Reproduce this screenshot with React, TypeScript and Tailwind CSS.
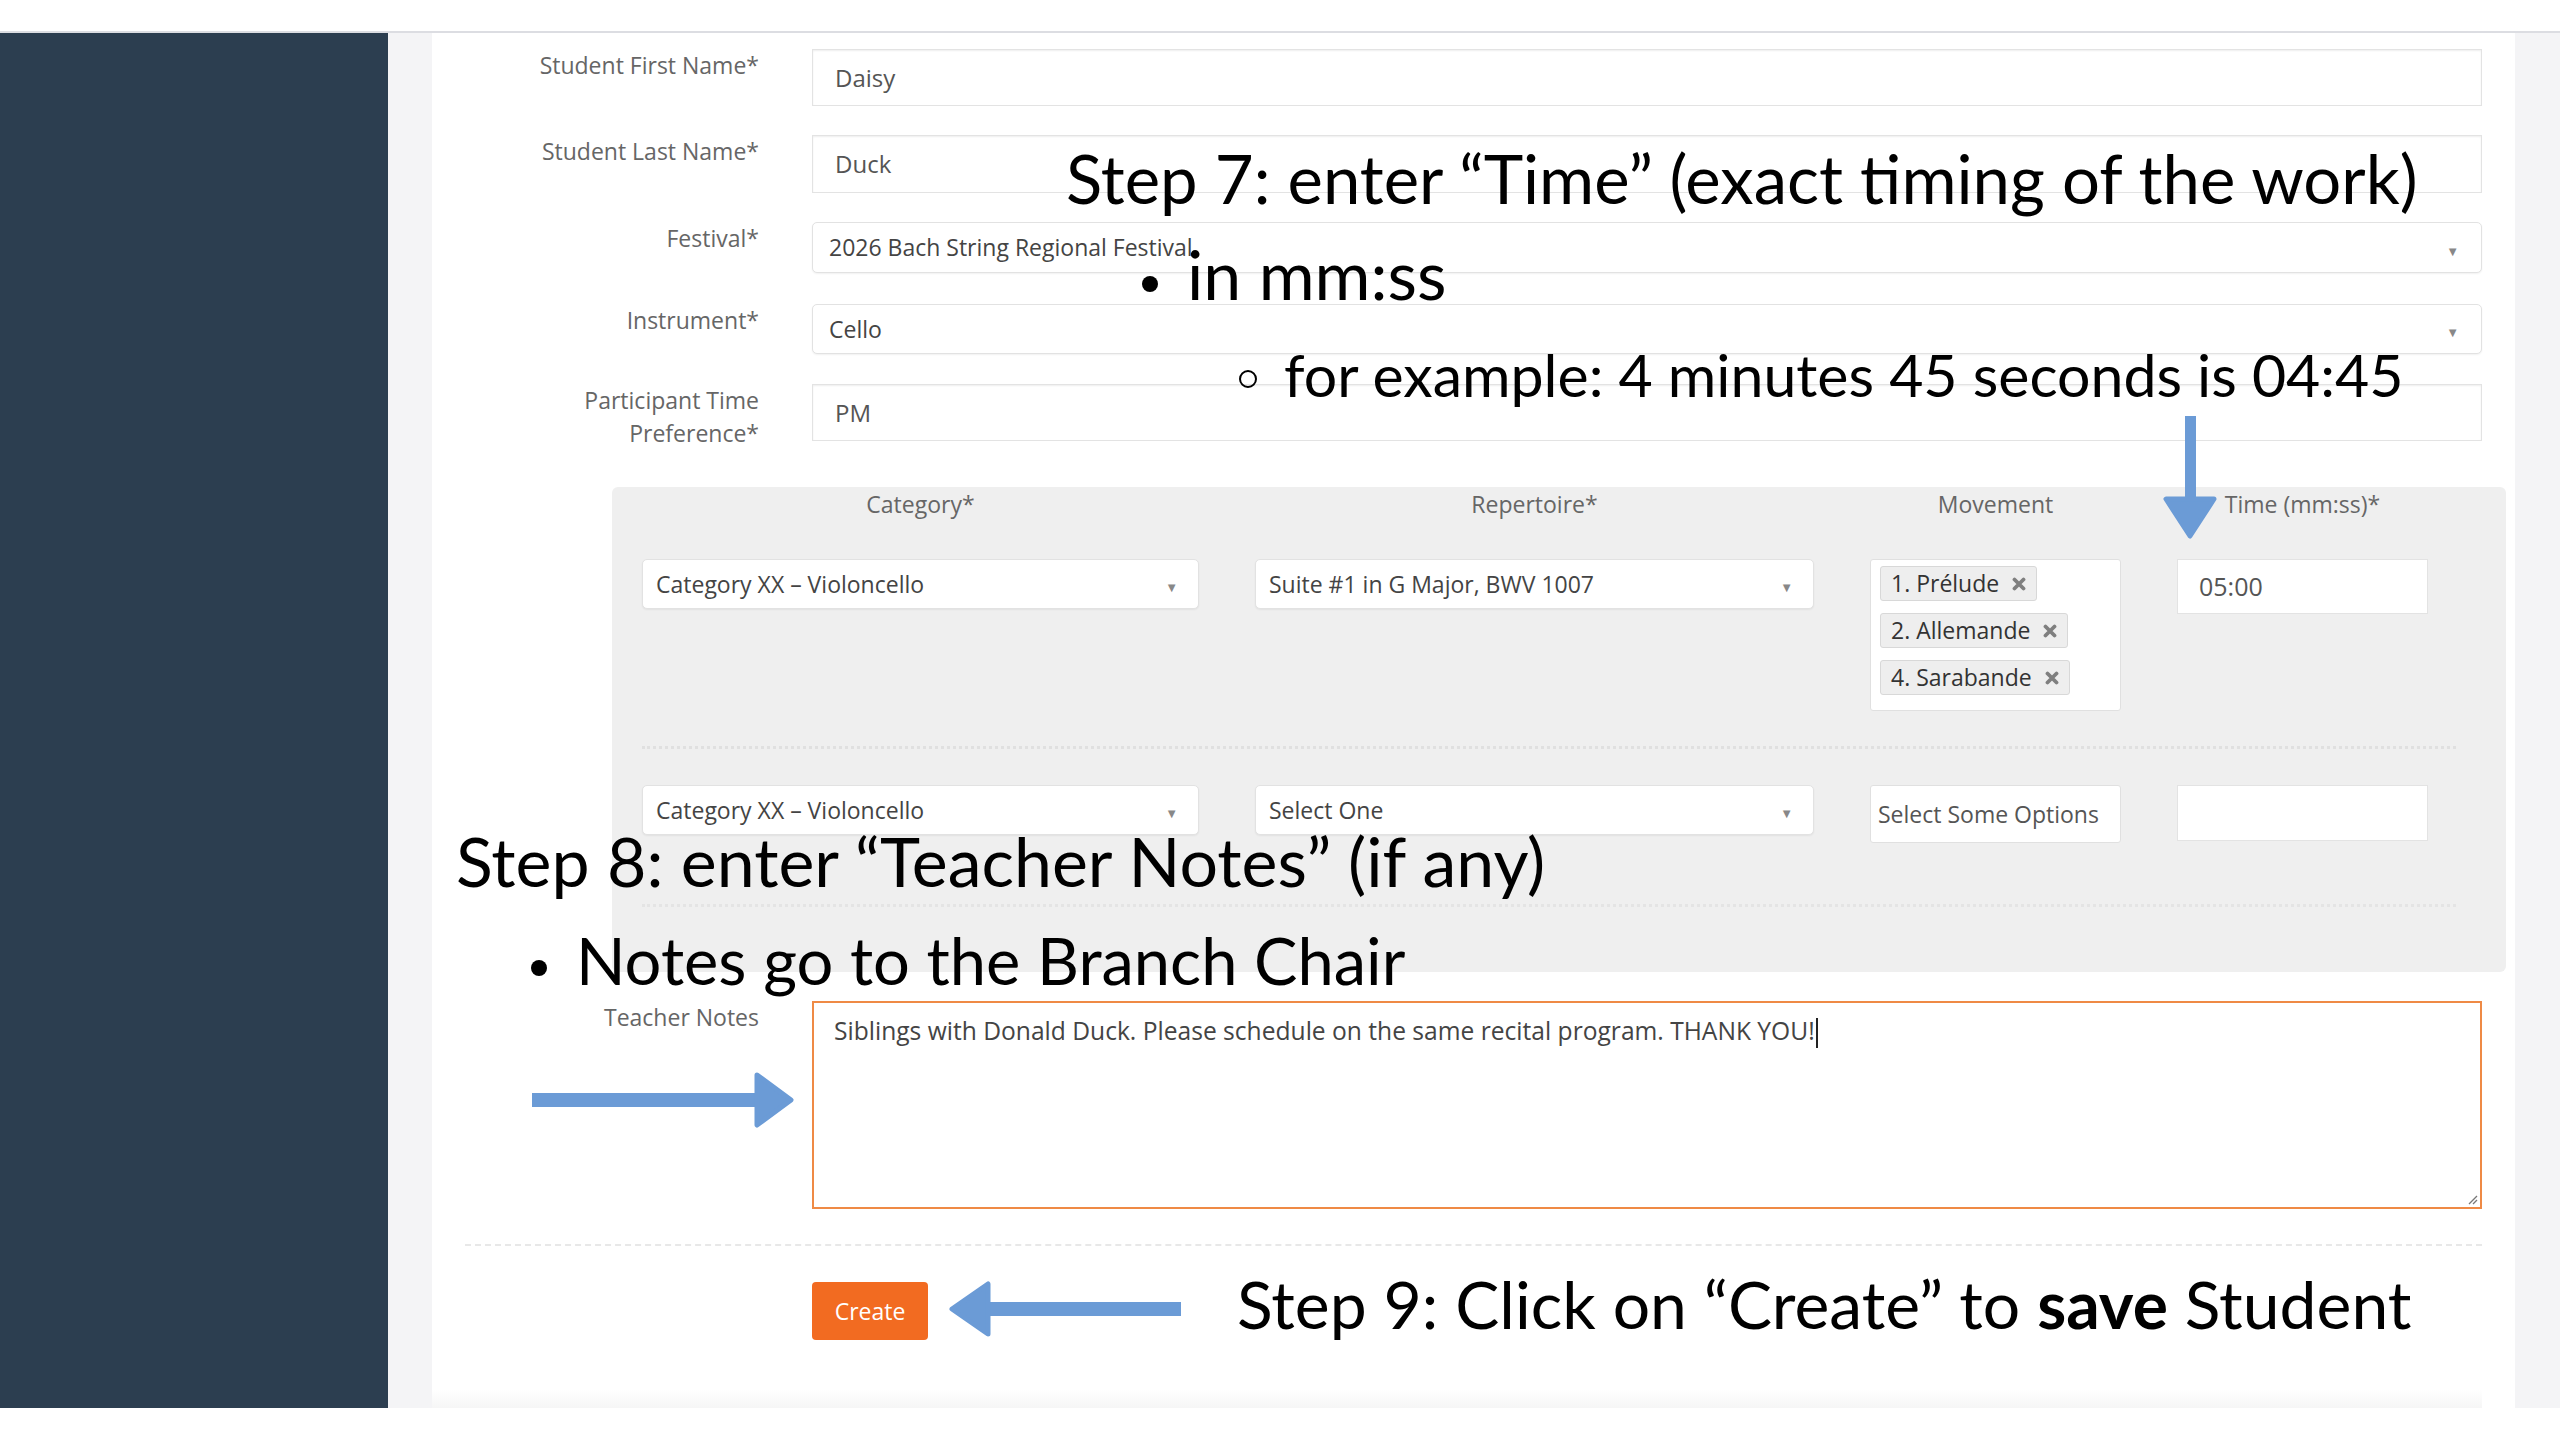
import React from 'react'

function Label({ children }: { children: React.ReactNode }) {
  return (
    <div className="w-[327px] shrink-0 text-right text-[23px] leading-[33px] text-[#666]">{children}</div>
  )
}

function TextInput({ value, h }: { value: string; h: string }) {
  return (
    <div
      className={`ml-[53px] w-[1670px] ${h} shrink-0 flex items-center pl-[22px] bg-white border border-[#e3e3e3] shadow-[inset_0_1px_2px_rgba(0,0,0,0.07)] text-[24px] text-[#555]`}
    >
      {value}
    </div>
  )
}

function Caret() {
  return <span className="text-[13px] text-[#888] mt-[8px]">▼</span>
}

function Select({ value, className }: { value: string; className: string }) {
  return (
    <div
      className={`${className} shrink-0 flex items-center justify-between bg-white border border-[#e2e2e2] rounded-[5px] shadow-[0_1px_2px_rgba(0,0,0,0.06)] text-[23px] text-[#444]`}
    >
      <span>{value}</span>
      <Caret />
    </div>
  )
}

function Tag({ text }: { text: string }) {
  return (
    <div className="h-[35px] flex items-center gap-[13px] pl-[10px] pr-[10px] bg-[#eeeeee] border border-[#d8d8d8] rounded-[3px] text-[23px] text-[#333]">
      <span>{text}</span>
      <svg width="14" height="14" viewBox="0 0 14 14">
        <path d="M2.5 2.5 L11.5 11.5 M11.5 2.5 L2.5 11.5" stroke="#7f7f7f" strokeWidth="3.8" strokeLinecap="round" />
      </svg>
    </div>
  )
}

function Arrow({ dir }: { dir: 'down' | 'right' | 'left' }) {
  if (dir === 'down') {
    return (
      <svg className="absolute left-[2160px] top-[414px]" width="60" height="130" viewBox="2160 414 60 130">
        <rect x="2185" y="416" width="11" height="86" fill="#6b9bd6" />
        <polygon points="2166,499 2214,499 2190,536" fill="#6b9bd6" stroke="#6b9bd6" strokeWidth="5" strokeLinejoin="round" />
      </svg>
    )
  }
  if (dir === 'right') {
    return (
      <svg className="absolute left-[530px] top-[1070px]" width="270" height="60" viewBox="530 1070 270 60">
        <rect x="532" y="1093" width="226" height="14" fill="#6b9bd6" />
        <polygon points="757,1075 791,1100 757,1125" fill="#6b9bd6" stroke="#6b9bd6" strokeWidth="5" strokeLinejoin="round" />
      </svg>
    )
  }
  return (
    <svg className="absolute left-[945px] top-[1279px]" width="240" height="60" viewBox="945 1279 240 60">
      <rect x="986" y="1302" width="195" height="14" fill="#6b9bd6" />
      <polygon points="952,1309 988,1284 988,1334" fill="#6b9bd6" stroke="#6b9bd6" strokeWidth="5" strokeLinejoin="round" />
    </svg>
  )
}

export default function App() {
  return (
    <div className="relative w-[2560px] h-[1440px] overflow-hidden bg-white font-['Open_Sans',sans-serif]">
      <div className="h-[31px] bg-white" />
      <div className="h-[2px] bg-[#dcdde2]" />

      <div className="flex h-[1375px]">
        <aside className="w-[388px] shrink-0 bg-[#2c3e50]" />
        <div className="w-[44px] shrink-0 bg-[#f4f4f6]" />

        <main className="w-[2083px] shrink-0 bg-white flex flex-col pt-[16px] pr-[33px]">
          <div className="flex items-start">
            <Label>Student First Name*</Label>
            <TextInput value="Daisy" h="h-[57px]" />
          </div>
          <div className="flex items-start mt-[29px]">
            <Label>Student Last Name*</Label>
            <TextInput value="Duck" h="h-[58px]" />
          </div>
          <div className="flex items-start mt-[29px]">
            <Label>Festival*</Label>
            <Select value="2026 Bach String Regional Festival" className="ml-[53px] w-[1670px] h-[51px] pl-[16px] pr-[22px]" />
          </div>
          <div className="flex items-start mt-[31px]">
            <Label>Instrument*</Label>
            <Select value="Cello" className="ml-[53px] w-[1670px] h-[50px] pl-[16px] pr-[22px]" />
          </div>
          <div className="flex items-start mt-[30px] h-[57px]">
            <Label>
              Participant Time
              <br />
              Preference*
            </Label>
            <TextInput value="PM" h="h-[57px]" />
          </div>

          {/* repertoire block */}
          <div className="ml-[180px] mt-[46px] w-[1894px] h-[485px] bg-[#efefef] rounded-[6px] pl-[30px] flex flex-col">
            <div className="flex gap-[56px] h-[32px] mt-[1px] text-[23px] text-[#666] text-center leading-[32px]">
              <div className="w-[557px]">Category*</div>
              <div className="w-[559px]">Repertoire*</div>
              <div className="w-[251px]">Movement</div>
              <div className="w-[251px]">Time (mm:ss)*</div>
            </div>

            <div className="flex gap-[56px] items-start mt-[39px] h-[152px]">
              <Select value="Category XX – Violoncello" className="w-[557px] h-[50px] pl-[13px] pr-[20px]" />
              <Select value="Suite #1 in G Major, BWV 1007" className="w-[559px] h-[50px] pl-[13px] pr-[20px]" />
              <div className="w-[251px] h-[152px] bg-white border border-[#e0e0e0] rounded-[3px] pl-[9px] pt-[6px] flex flex-col items-start gap-[12px]">
                <Tag text="1. Prélude" />
                <Tag text="2. Allemande" />
                <Tag text="4. Sarabande" />
              </div>
              <div className="w-[251px] h-[55px] bg-white border border-[#e3e3e3] flex items-center pl-[21px] text-[25px] text-[#555]">
                05:00
              </div>
            </div>

            <div className="mt-[35px] mr-[50px] border-t-[3px] border-dotted border-[#e0e0e0]" />

            <div className="flex gap-[56px] items-start mt-[36px] h-[58px]">
              <Select value="Category XX – Violoncello" className="w-[557px] h-[50px] pl-[13px] pr-[20px]" />
              <Select value="Select One" className="w-[559px] h-[50px] pl-[13px] pr-[20px]" />
              <div className="w-[251px] h-[58px] bg-white border border-[#e0e0e0] rounded-[3px] flex items-center pl-[7px] text-[23px] text-[#555]">
                Select Some Options
              </div>
              <div className="w-[251px] h-[56px] bg-white border border-[#e3e3e3]" />
            </div>

            <div className="mt-[61px] mr-[50px] border-t-[3px] border-dotted border-[#e4e4e4]" />
          </div>

          <div className="flex items-start mt-[29px]">
            <Label>Teacher Notes</Label>
            <div className="relative ml-[53px] w-[1670px] h-[208px] shrink-0 bg-white border-2 border-[#ef8a45] pl-[20px] pt-[10px] text-[24.6px] text-[#444]">
              Siblings with Donald Duck. Please schedule on the same recital program. THANK YOU!
              <span className="inline-block w-[2px] h-[30px] bg-[#222] align-middle ml-[1px]" />
              <svg className="absolute right-[2px] bottom-[2px]" width="12" height="12" viewBox="0 0 12 12">
                <path d="M11 3 L3 11 M11 7 L7 11" stroke="#777" strokeWidth="1.3" />
              </svg>
            </div>
          </div>

          <div className="ml-[33px] mt-[35px] border-t-2 border-dashed border-[#e8e8e8]" />

          <div className="ml-[380px] mt-[36px]">
            <button className="w-[116px] h-[58px] rounded-[4px] bg-[#f26b21] text-white text-[23px]">Create</button>
          </div>

          <div className="mt-auto h-[18px] bg-gradient-to-b from-white to-[#f6f6f6]" />
        </main>

        <div className="flex-1 bg-[#f4f4f6]" />
      </div>

      {/* annotations */}
      <div className="absolute inset-0 font-['Lato',sans-serif] text-black leading-none whitespace-nowrap">
        <div className="absolute left-[1066px] top-[145px] text-[67px]">Step 7: enter “Time” (exact timing of the work)</div>
        <div className="absolute left-[1142px] top-[276px] w-[16px] h-[16px] rounded-full bg-black" />
        <div className="absolute left-[1187px] top-[240px] text-[68px]">in mm:ss</div>
        <div className="absolute left-[1239px] top-[370px] w-[18px] h-[18px] rounded-full border-2 border-black" />
        <div className="absolute left-[1284px] top-[345px] text-[59px]">for example: 4 minutes 45 seconds is 04:45</div>

        <div className="absolute left-[456px] top-[827px] text-[68px]">Step 8: enter “Teacher Notes” (if any)</div>
        <div className="absolute left-[531px] top-[960px] w-[16px] h-[16px] rounded-full bg-black" />
        <div className="absolute left-[576px] top-[928px] text-[65px]">Notes go to the Branch Chair</div>

        <div className="absolute left-[1237px] top-[1271px] text-[66px]">
          Step 9: Click on “Create” to <span className="font-bold">save</span> Student
        </div>
      </div>

      <Arrow dir="down" />
      <Arrow dir="right" />
      <Arrow dir="left" />
    </div>
  )
}
